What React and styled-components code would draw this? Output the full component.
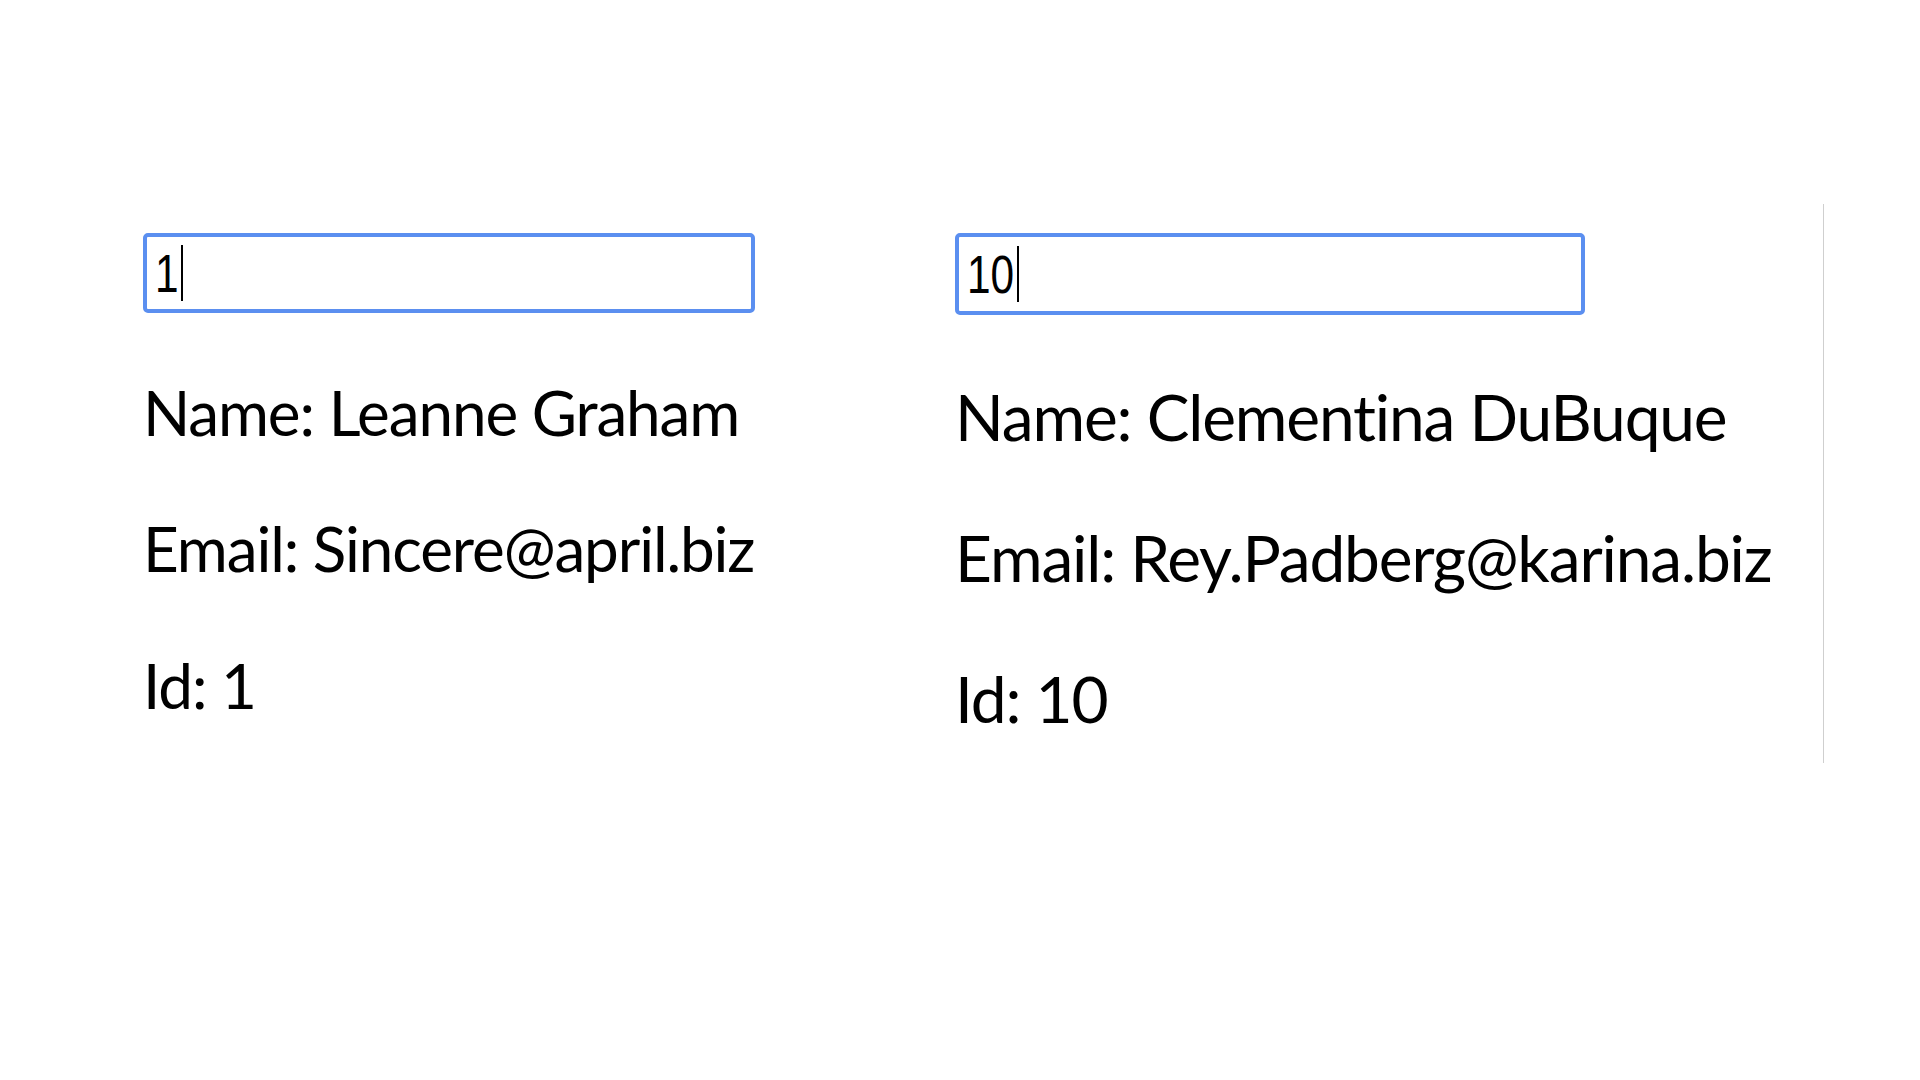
import styled, { createGlobalStyle } from "styled-components";

const GlobalStyle = createGlobalStyle`
  html, body {
    margin: 0;
    padding: 0;
    background: #ffffff;
  }

  body {
    font-family: Lato, "Open Sans", sans-serif;
    color: #000000;
  }
`;

const Page = styled.main`
  display: flex;
  align-items: flex-start;
  width: 1920px;
  height: 1080px;
  box-sizing: border-box;
  padding: 204px 0 0 143px;
`;

const Column = styled.section`
  flex: 0 0 ${(props) => props.width}px;
  padding-top: 29px;
  font-size: ${(props) => props.fs}px;
`;

const Divider = styled.div`
  flex: 0 0 1px;
  height: 559px;
  background: #cfcfcf;
`;

// looks like a focused text input with its caret
const Field = styled.div`
  display: flex;
  align-items: center;
  box-sizing: border-box;
  width: ${(props) => props.width}px;
  height: ${(props) => props.height}px;
  padding-left: 8px;
  border: 4px solid #5b8ff0;
  border-radius: 5px;
  font-family: "Liberation Sans", Arial, sans-serif;
  font-size: 53px;
  line-height: 1;
`;

const Value = styled.span`
  display: inline-block;
  transform: scaleX(0.8);
  transform-origin: left center;
  margin-right: ${(props) => props.chars * -6}px;
`;

const Caret = styled.span`
  display: inline-block;
  width: 2px;
  height: 56px;
  margin-left: 3px;
  background: #000000;
`;

const Text = styled.p`
  margin: 1em 0;
  line-height: 1.2;
  letter-spacing: -0.018em;
  font-variant-ligatures: none;
  white-space: nowrap;
`;

const users = [
  {
    id: 1,
    name: "Leanne Graham",
    email: "Sincere@april.biz",
    width: 812,
    fs: 62,
    field: [612, 80],
  },
  {
    id: 10,
    name: "Clementina DuBuque",
    email: "Rey.Padberg@karina.biz",
    width: 868,
    fs: 64,
    field: [630, 82],
  },
];

const App = () => {
  return (
    <>
      <GlobalStyle />
      <Page>
        {users.map((user) => (
          <Column key={user.id} width={user.width} fs={user.fs}>
            <Field width={user.field[0]} height={user.field[1]}>
              <Value chars={String(user.id).length}>{user.id}</Value>
              <Caret />
            </Field>
            <Text>Name: {user.name}</Text>
            <Text>Email: {user.email}</Text>
            <Text>Id: {user.id}</Text>
          </Column>
        ))}
        <Divider />
      </Page>
    </>
  );
};

export default App;
